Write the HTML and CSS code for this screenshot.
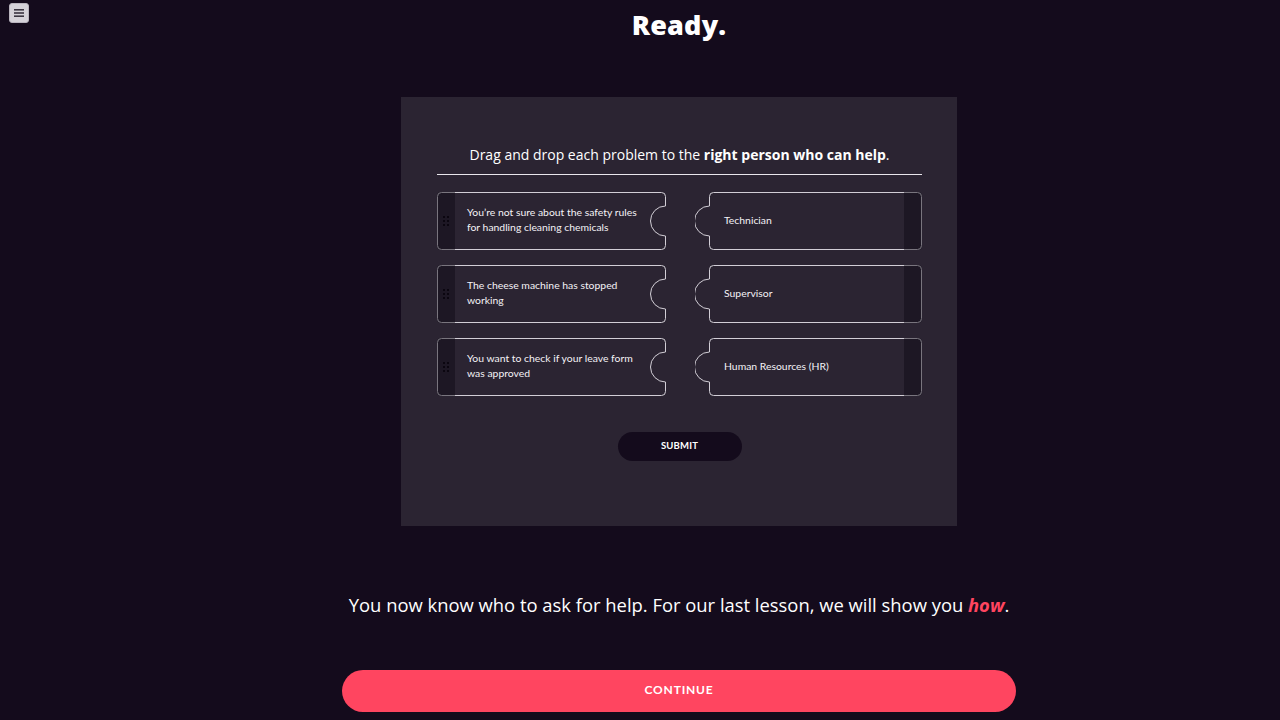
FILE: index.html
```html
<!DOCTYPE html>
<html lang="en">
<head>
<meta charset="utf-8">
<title>Ready.</title>
<link rel="stylesheet" href="styles.css">
</head>
<body>
<button class="menu-btn" aria-label="Menu">
  <svg width="12" height="10" viewBox="0 0 12 10"><rect x="1" y="1" width="10" height="1.6" fill="#3b3541"/><rect x="1" y="4.2" width="10" height="1.6" fill="#3b3541"/><rect x="1" y="7.4" width="10" height="1.6" fill="#3b3541"/></svg>
</button>
<main class="main">
  <h1 class="title">Ready.</h1>
  <section class="card">
    <h2 class="instructions">Drag and drop each problem to the <strong>right person who can help</strong>.</h2>
    <div class="rows">
      <div class="row">
        <div class="piece piece-left">
          <svg class="outline" width="229" height="58" viewBox="0 0 229 58"><path d="M4.5,0.5 H224.5 A4,4 0 0 1 228.5,4.5 V14 A15,15 0 0 0 228.5,44 V53.5 A4,4 0 0 1 224.5,57.5 H4.5 A4,4 0 0 1 0.5,53.5 V4.5 A4,4 0 0 1 4.5,0.5 Z"/></svg>
          <div class="grip"><span></span><span></span><span></span><span></span><span></span><span></span></div>
          <p class="piece-text">You’re not sure about the safety rules for handling cleaning chemicals</p>
        </div>
        <div class="piece piece-right">
          <svg class="outline" width="227" height="58" viewBox="0 0 227 58"><path d="M18.5,0.5 H222.5 A4,4 0 0 1 226.5,4.5 V53.5 A4,4 0 0 1 222.5,57.5 H18.5 A4,4 0 0 1 14.5,53.5 V44 A15,15 0 0 1 14.5,14 V4.5 A4,4 0 0 1 18.5,0.5 Z"/></svg>
          <p class="piece-text">Technician</p>
          <div class="end-strip"></div>
        </div>
      </div>
      <div class="row">
        <div class="piece piece-left">
          <svg class="outline" width="229" height="58" viewBox="0 0 229 58"><path d="M4.5,0.5 H224.5 A4,4 0 0 1 228.5,4.5 V14 A15,15 0 0 0 228.5,44 V53.5 A4,4 0 0 1 224.5,57.5 H4.5 A4,4 0 0 1 0.5,53.5 V4.5 A4,4 0 0 1 4.5,0.5 Z"/></svg>
          <div class="grip"><span></span><span></span><span></span><span></span><span></span><span></span></div>
          <p class="piece-text">The cheese machine has stopped working</p>
        </div>
        <div class="piece piece-right">
          <svg class="outline" width="227" height="58" viewBox="0 0 227 58"><path d="M18.5,0.5 H222.5 A4,4 0 0 1 226.5,4.5 V53.5 A4,4 0 0 1 222.5,57.5 H18.5 A4,4 0 0 1 14.5,53.5 V44 A15,15 0 0 1 14.5,14 V4.5 A4,4 0 0 1 18.5,0.5 Z"/></svg>
          <p class="piece-text">Supervisor</p>
          <div class="end-strip"></div>
        </div>
      </div>
      <div class="row">
        <div class="piece piece-left">
          <svg class="outline" width="229" height="58" viewBox="0 0 229 58"><path d="M4.5,0.5 H224.5 A4,4 0 0 1 228.5,4.5 V14 A15,15 0 0 0 228.5,44 V53.5 A4,4 0 0 1 224.5,57.5 H4.5 A4,4 0 0 1 0.5,53.5 V4.5 A4,4 0 0 1 4.5,0.5 Z"/></svg>
          <div class="grip"><span></span><span></span><span></span><span></span><span></span><span></span></div>
          <p class="piece-text">You want to check if your leave form was approved</p>
        </div>
        <div class="piece piece-right">
          <svg class="outline" width="227" height="58" viewBox="0 0 227 58"><path d="M18.5,0.5 H222.5 A4,4 0 0 1 226.5,4.5 V53.5 A4,4 0 0 1 222.5,57.5 H18.5 A4,4 0 0 1 14.5,53.5 V44 A15,15 0 0 1 14.5,14 V4.5 A4,4 0 0 1 18.5,0.5 Z"/></svg>
          <p class="piece-text">Human Resources (HR)</p>
          <div class="end-strip"></div>
        </div>
      </div>
    </div>
    <button class="submit-btn">SUBMIT</button>
  </section>
  <p class="outro">You now know who to ask for help. For our last lesson, we will show you <em class="accent">how</em>.</p>
  <button class="continue-btn">CONTINUE</button>
</main>
</body>
</html>
```

FILE: styles.css
```css
* { box-sizing: border-box; }

html, body {
  margin: 0;
  padding: 0;
  background: #140b1c;
  color: #ffffff;
  font-family: "Open Sans", "Noto Sans", sans-serif;
  height: 720px;
  overflow: hidden;
}

.menu-btn {
  position: absolute;
  left: 9px;
  top: 3px;
  width: 20px;
  height: 20px;
  padding: 0;
  border: 1px solid #b9b4be;
  border-radius: 3px;
  background: #d5d2d9;
  display: flex;
  align-items: center;
  justify-content: center;
}

.main {
  margin-left: 78px;
  display: flex;
  flex-direction: column;
  align-items: center;
}

.title {
  margin: 5px 0 0;
  height: 40px;
  line-height: 40px;
  font-size: 27px;
  font-weight: 800;
  letter-spacing: 0.2px;
}

.card {
  margin-top: 52px;
  width: 556px;
  height: 429px;
  background: #2b2432;
  padding: 46px 35px 0 36px;
  display: flex;
  flex-direction: column;
  align-items: center;
}

.instructions {
  width: 100%;
  margin: 0;
  padding-bottom: 7px;
  border-bottom: 1px solid #e9e6ec;
  text-align: center;
  font-size: 14px;
  font-weight: 400;
  line-height: 24px;
}

.instructions strong { font-weight: 700; }

.rows {
  width: 100%;
  margin-top: 17px;
  display: flex;
  flex-direction: column;
  gap: 15px;
}

.row {
  display: flex;
  justify-content: space-between;
}

.piece {
  position: relative;
  height: 58px;
  display: flex;
  align-items: center;
}

.outline {
  position: absolute;
  left: 0;
  top: 0;
}

.outline path {
  fill: none;
  stroke: #d2ced6;
  stroke-width: 1;
}

.piece-left { width: 229px; }
.piece-right { width: 227px; padding-left: 29px; }

.grip {
  position: relative;
  width: 18px;
  height: 58px;
  border-radius: 4px 0 0 4px;
  background: rgba(14, 8, 20, 0.45);
  display: grid;
  grid-template-columns: repeat(2, 2px);
  grid-auto-rows: 2px;
  gap: 2px;
  align-content: center;
  justify-content: center;
}

.grip span {
  width: 2px;
  height: 2px;
  background: #0b0610;
}

.end-strip {
  position: relative;
  width: 18px;
  height: 58px;
  border-radius: 0 4px 4px 0;
  background: rgba(14, 8, 20, 0.45);
}

.piece-text {
  position: relative;
  margin: 0 0 2px;
  flex: 1;
  font-family: "Lato", sans-serif;
  font-size: 10.4px;
  line-height: 15px;
  color: #f4f2f6;
}

.piece-left .piece-text { padding: 0 22px 0 12px; }

.submit-btn {
  margin-top: 36px;
  width: 124px;
  height: 29px;
  padding: 0 0 2px;
  border: none;
  border-radius: 15px;
  background: #140b1c;
  color: #ffffff;
  font-family: "Lato", sans-serif;
  font-weight: 700;
  font-size: 9.5px;
  letter-spacing: 0.2px;
}

.outro {
  margin: 65px 0 0;
  font-size: 18.4px;
  line-height: 28px;
  color: #ffffff;
}

.accent {
  color: #ff4560;
  font-weight: 700;
}

.continue-btn {
  margin-top: 51px;
  width: 674px;
  height: 42px;
  padding: 0 0 4px;
  border: none;
  border-radius: 21px;
  background: #ff4560;
  color: #ffffff;
  font-family: "Lato", sans-serif;
  font-weight: 700;
  font-size: 12px;
  letter-spacing: 0.8px;
}
```
